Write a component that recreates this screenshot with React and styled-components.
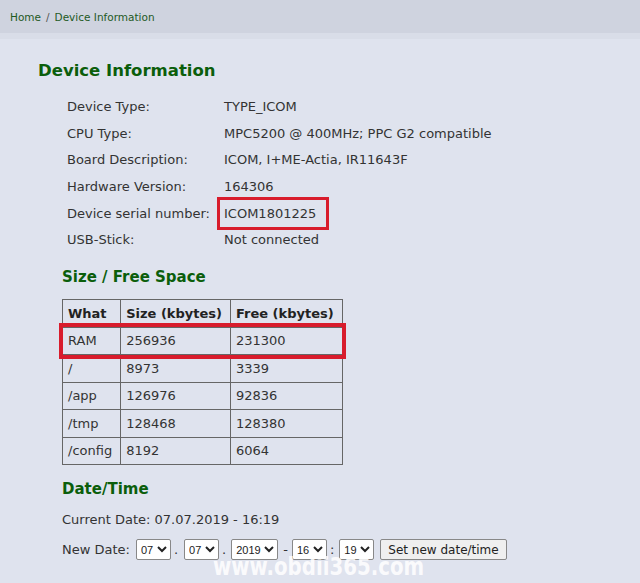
import React from "react";
import styled, { createGlobalStyle } from "styled-components";

const GlobalStyle = createGlobalStyle`
  html, body {
    margin: 0;
    padding: 0;
    background: #dfe3ee;
    font-family: "DejaVu Sans", Verdana, sans-serif;
    color: #333;
  }
`;

const deviceInfo = [
  ["Device Type:", "TYPE_ICOM"],
  ["CPU Type:", "MPC5200 @ 400MHz; PPC G2 compatible"],
  ["Board Description:", "ICOM, I+ME-Actia, IR11643F"],
  ["Hardware Version:", "164306"],
  ["Device serial number:", "ICOM1801225", true],
  ["USB-Stick:", "Not connected"],
];

const space = [
  ["RAM", "256936", "231300", true],
  ["/", "8973", "3339"],
  ["/app", "126976", "92836"],
  ["/tmp", "128468", "128380"],
  ["/config", "8192", "6064"],
];

const Page = styled.div`
  position: relative;
  width: 640px;
  height: 583px;
  overflow: hidden;
`;

const Breadcrumb = styled.div`
  height: 33px;
  display: flex;
  align-items: center;
  padding-left: 10px;
  background: #cfd3df;
  border-bottom: 6px solid #d9dde8;
  font-size: 10.5px;
  color: #1f5a1f;

  span {
    margin: 0 5px;
    color: #555;
  }
`;

const Main = styled.div`
  padding: 22px 0 0 38px;
`;

const Title = styled.h1`
  margin: 0 0 13px;
  font-size: 16.5px;
  font-weight: bold;
  color: #0b5e0b;
`;

const InfoGrid = styled.div`
  display: grid;
  grid-template-columns: 157px auto;
  grid-auto-rows: 26.7px;
  align-items: center;
  margin-left: 29px;
  font-size: 13px;
`;

const Value = styled.div`
  justify-self: start;
  ${(p) =>
    p.$marked &&
    `
    border: 3px solid #d81c2c;
    padding: 6px 10px 6px 4px;
    margin: -9px -13px -9px -7px;
  `}
`;

const Section = styled.h2`
  margin: ${(p) => p.$top || 0}px 0 0;
  font-size: 15px;
  font-weight: bold;
  color: #0b5e0b;
`;

const Block = styled.div`
  margin-left: 24px;
`;

const Table = styled.table`
  border-collapse: collapse;
  margin-top: 13px;
  font-size: 13px;

  th,
  td {
    border: 1px solid #666;
    height: 26.5px;
    padding: 0 8px 0 5px;
    text-align: left;
    white-space: nowrap;
  }
  th {
    font-weight: bold;
    color: #222;
  }
`;

const Row = styled.tr`
  ${(p) => p.$marked && `outline: 4px solid #d81c2c; outline-offset: 0px;`}
`;

const DateBlock = styled.div`
  margin-top: 15px;
  font-size: 13px;
`;

const Line = styled.div`
  display: flex;
  align-items: center;
  margin-top: ${(p) => p.$gap || 0}px;
`;

const Sep = styled.span`
  margin: 0 ${(p) => p.$r}px 0 ${(p) => p.$l}px;
`;

const Select = styled.select`
  font-family: "Liberation Sans", Arial, sans-serif;
  font-size: 11px;
  height: 21px;
  padding: 0;
  border: 1px solid #888;
  border-radius: 2px;
  background: #fff;
  color: #222;
`;

const Button = styled.button`
  margin-left: 6px;
  font-family: "DejaVu Sans", Verdana, sans-serif;
  font-size: 12px;
  height: 21px;
  padding: 0 7px;
  border: 1px solid #888;
  border-radius: 2px;
  background: #efefef;
  color: #222;
`;

const Watermark = styled.div`
  position: absolute;
  left: 213px;
  top: 552px;
  font-family: "DejaVu Sans Condensed", "DejaVu Sans", sans-serif;
  font-stretch: condensed;
  font-weight: bold;
  font-size: 25px;
  transform: scaleX(0.88);
  transform-origin: left center;
  color: rgba(255, 255, 255, 0.85);
  pointer-events: none;
`;

const Opt = ({ v }) => (
  <Select defaultValue={v}>
    <option>{v}</option>
  </Select>
);

export default function App() {
  return (
    <Page>
      <GlobalStyle />
      <Breadcrumb>
        Home<span>/</span>Device Information
      </Breadcrumb>
      <Main>
        <Title>Device Information</Title>
        <InfoGrid>
          {deviceInfo.map(([k, v, m]) => (
            <React.Fragment key={k}>
              <div>{k}</div>
              <Value $marked={m}>{v}</Value>
            </React.Fragment>
          ))}
        </InfoGrid>
        <Block>
          <Section $top={15}>Size / Free Space</Section>
          <Table>
            <thead>
              <tr>
                <th>What</th>
                <th>Size (kbytes)</th>
                <th>Free (kbytes)</th>
              </tr>
            </thead>
            <tbody>
              {space.map(([a, b, c, m]) => (
                <Row key={a} $marked={m}>
                  <td>{a}</td>
                  <td>{b}</td>
                  <td>{c}</td>
                </Row>
              ))}
            </tbody>
          </Table>
          <DateBlock>
            <Section>Date/Time</Section>
            <Line $gap={14}>Current Date: 07.07.2019 - 16:19</Line>
            <Line $gap={12}>
              <Sep $l={0} $r={6}>New Date:</Sep>
              <Opt v="07" />
              <Sep $l={3} $r={6}>.</Sep>
              <Opt v="07" />
              <Sep $l={3} $r={5}>.</Sep>
              <Opt v="2019" />
              <Sep $l={5} $r={4}>-</Sep>
              <Opt v="16" />
              <Sep $l={3} $r={5}>:</Sep>
              <Opt v="19" />
              <Button>Set new date/time</Button>
            </Line>
          </DateBlock>
        </Block>
      </Main>
      <Watermark>www.obdii365.com</Watermark>
    </Page>
  );
}
